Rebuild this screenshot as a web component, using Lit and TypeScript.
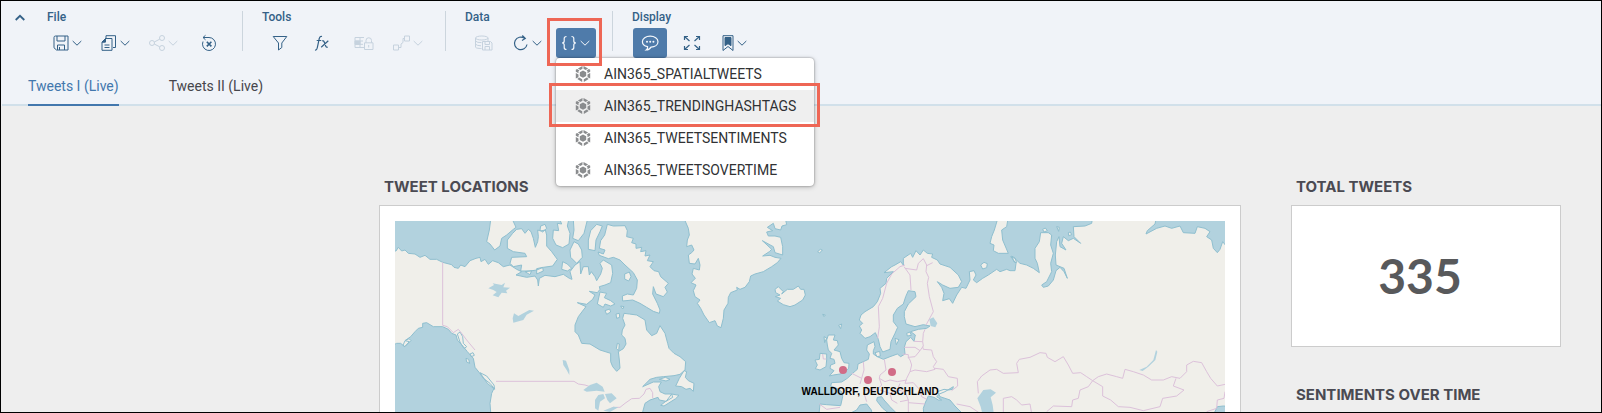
import { LitElement, html, svg, css, nothing } from "lit";
import { customElement, property, state } from "lit/decorators.js";
import { classMap } from "lit/directives/class-map.js";

const icons: Record<string, unknown> = {
  save: svg`<path d="M2.500 1h12.500v14H3.500L1 12.800V2.500Q1 1 2.500 1zM4 1v5h8V1M4.500 15v-5h7v5M6.500 12v3"/>`,
  copy: svg`<path d="M5 3V.7h9.500v11.800H12M4.500 3.500H11V15.300H1V7zM4.500 3.500V7H1M3.500 10h5M3.500 12.500h5"/><path class="solid" d="M1 7l3.500-3.500V7z"/>`,
  share: svg`<circle cx="3" cy="8" r="2.500"/><circle cx="13" cy="3" r="2.500"/><circle cx="13" cy="13" r="2.500"/><path d="M5.300 7l5.400-2.800M5.300 9l5.400 2.800"/>`,
  reset: svg`<path d="M2 6.500A6.500 6.500 0 1 0 8 2.500H2M4.500.3L2 2.500l2.500 2.300"/><path class="heavy" d="M5.800 6.800l4.600 4.600M10.400 6.800l-4.600 4.600"/>`,
  filter: svg`<path d="M1.200 1.500h13.600L9.800 8v4.500L6.500 15V8z"/>`,
  fx: svg`<path class="bold" d="M8 1.500Q5.800.8 5.300 3.500L3.200 13Q2.800 15.300 1 15M2.700 5.500h4.500M8 6q1.500-.8 2.200 1l1.600 4.200q.6 1.500 1.900.7M14.300 5.700L7.200 12.200"/>`,
  lock: svg`<path d="M8 12.500H-1V2.500H8M-1 6h8M-1 9.300h8M4 2.500v10"/><path class="solid" d="M-1 6h5v3.300h-5z"/><path d="M8.500 7.800h8.500v6.700H8.500zM10 7.800V5.500a2.700 2.700 0 0 1 5.500 0v2.300M12.700 10v2.500"/>`,
  path: svg`<path d="M-.5 10h5v5h-5zM10.500 1h5v5h-5zM4.500 12.500H7V9l2-1.500v-4h1.500"/>`,
  dbsave: svg`<path d="M6.500 13.500C3 13.500.500 13 .500 12V3M13 3v3M.500 6q1.500 1.800 6 1.600M.500 9.200q1.500 1.600 5.500 1.600"/><ellipse cx="6.800" cy="3" rx="6.300" ry="2"/><path d="M7.500 6.500h8l1.500 1.500v7H7.500zM10 6.500v3h4.500v-3M10 15v-3.500h4.500V15"/>`,
  refresh: svg`<path class="bold" d="M14 9.500A6.300 6.300 0 1 1 11.500 3.300M9.300.5l3 3-3.300 2"/>`,
  braces: svg`<path class="bold" d="M5.500 1.500Q3.200 1.500 3.200 3.500V6Q3.200 8 1 8q2.200 0 2.200 2v2.500q0 2 2.300 2M10.500 1.500q2.300 0 2.300 2V6q0 2 2.200 2-2.200 0-2.200 2v2.500q0 2-2.300 2"/>`,
  chat: svg`<path class="bold" d="M8.200 1.200C12.500 1.200 16 3.500 16 6.700s-3.200 5.200-7 5.400Q7.500 14.800 4.200 15q1.800-1.500 1.400-3.300C2.500 11 .4 9.200.4 6.700c0-3.200 3.500-5.500 7.800-5.500z"/><path class="dots" d="M5 6.700h.010M8.200 6.700h.010M11.400 6.700h.010"/>`,
  expand: svg`<path class="bold" d="M.5 5V1.500H4M.8 1.800L5.500 6M12 1.500h3.500V5M15.200 1.800L10.500 6M.5 11v3.500H4M.8 14.200L5.500 10M12 14.500h3.500V11M15.200 14.200L10.500 10"/>`,
  bookmark: svg`<path d="M3 .7h10v14.800L8 11.500l-5 4z"/><path class="solid" d="M5 2.500h6v8.200L8 8.700l-3 2z"/>`,
  down: svg`<path class="bold" d="M.7 1L5 5.200 9.300 1"/>`,
  cube: svg`<path class="solid" stroke="none" d="M8 4.500l3.200 1.800v3.600L8 11.700 4.800 9.900V6.300zM7.500 0v2.700L5.300 4 2.900 2.600zM8.500 0v2.700L10.700 4l2.400-1.400zM2.100 3l2.400 1.400-1 .8v2L.8 5.700V3.800zM13.900 3l-2.400 1.400 1 .8v2l2.700-1.500V3.800zM.8 7l2.700 1.500v2.700L.8 12.500zM15.200 7l-2.700 1.500v2.700l2.700 1.300zM4.200 11.500l3 1.700v2.800L2.300 13.100zM11.800 11.500l-3 1.700v2.800l4.900-2.900z"/>`,
};

const icon = (name: string, slim = false) =>
  html`<svg class=${classMap({ icon: true, slim })} viewBox=${slim ? "2 0 12 16" : "0 0 16 16"} aria-hidden="true">${icons[name]}</svg>`;
const chevron = html`<svg class="chevron" viewBox="0 0 10 6" aria-hidden="true">${icons.down}</svg>`;

interface Tool {
  icon: string;
  label: string;
  menu?: boolean;
  off?: boolean;
  active?: boolean;
  slim?: boolean;
}

const groups: { title: string; tools: Tool[] }[] = [
  {
    title: "File",
    tools: [
      { icon: "save", label: "Save", menu: true },
      { icon: "copy", label: "Copy", menu: true },
      { icon: "share", label: "Share", menu: true, off: true },
      { icon: "reset", label: "Reset" },
    ],
  },
  {
    title: "Tools",
    tools: [
      { icon: "filter", label: "Filter" },
      { icon: "fx", label: "Formula" },
      { icon: "lock", label: "Lock cells", off: true },
      { icon: "path", label: "Link", menu: true, off: true },
    ],
  },
  {
    title: "Data",
    tools: [
      { icon: "dbsave", label: "Publish data", off: true },
      { icon: "refresh", label: "Refresh", menu: true },
      { icon: "braces", label: "Variables", menu: true, active: true },
    ],
  },
  {
    title: "Display",
    tools: [
      { icon: "chat", label: "Comments", active: true },
      { icon: "expand", label: "Full screen" },
      { icon: "bookmark", label: "Bookmark", menu: true, slim: true },
    ],
  },
];

const models = ["AIN365_SPATIALTWEETS", "AIN365_TRENDINGHASHTAGS", "AIN365_TWEETSENTIMENTS", "AIN365_TWEETSOVERTIME"];

@customElement("tool-bar")
class ToolBar extends LitElement {
  @state() private open = true;
  @state() private current = 1;

  static styles = css`
    :host { display: flex; align-items: flex-start; padding-top: 10px; color: #346187; }
    button { font: inherit; border: 0; background: none; color: inherit; padding: 0; margin: 0; }
    svg { display: block; fill: none; stroke: currentColor; stroke-width: 1; overflow: visible; }
    .solid { fill: currentColor; }
    .bold { stroke-width: 1.2; }
    .heavy { stroke-width: 1.6; }
    .dots { stroke-width: 2; stroke-linecap: round; }
    .icon { width: 16px; height: 16px; }
    .icon.slim { width: 12px; }
    .chevron { width: 10px; height: 6px; }
    .chevron .bold { stroke-width: 1; }
    .collapse { width: 47px; height: 14px; display: flex; justify-content: center; align-items: center; padding-right: 10px; }
    .collapse .bold { stroke-width: 1.8; }
    .collapse .chevron { transform: rotate(180deg); }
    .group { position: relative; padding: 0 16px 0 20px; }
    .group:first-of-type { padding-left: 0; }
    .group + .group { border-left: 1px solid transparent; }
    .group + .group::before { content: ""; position: absolute; left: -1px; top: 0; width: 1px; height: 40px; background: #ccd5dd; }
    .title { font-size: 12px; line-height: 12px; margin: 0 0 5px -1px; font-weight: 500; }
    .tools { display: flex; gap: 8px; }
    .slot { position: relative; }
    .tool { width: 34px; height: 30px; display: flex; align-items: center; justify-content: center; gap: 3px; border-radius: 3px; }
    .tool.wide { width: 40px; padding-right: 1px; }
    .tool.narrow { width: 36px; }
    .tool.off { color: #c6d2de; }
    .tool.on { background: #4f7baa; color: #f4f8fc; }
    .menu {
      position: absolute; z-index: 1; top: 30px; left: 0; min-width: 258px; margin: 0; padding: 0; list-style: none;
      background: #fff; border-radius: 4px; box-shadow: 0 0 2px rgba(0, 0, 0, 0.4), 0 1px 5px rgba(0, 0, 0, 0.25);
      color: #303234; white-space: nowrap;
    }
    .menu li { position: relative; }
    .entry { width: 100%; height: 32px; display: flex; align-items: center; gap: 13px; padding: 0 16px 0 19px; font-size: 14px; line-height: 20px; }
    .entry .icon { color: #8a8c8e; }
    .entry.current { background: #efefef; }
    .mark { position: absolute; z-index: 2; border: 3px solid #ee6655; pointer-events: none; }
    .mark-button { inset: -10px -6px -8px -9px; }
    .mark-entry { inset: -7px -6px -5px -7px; }
  `;

  private renderMenu() {
    return html`
      ${this.open
        ? html`<ul class="menu">
            ${models.map(
              (m, i) => html`<li>
                <button class=${classMap({ entry: true, current: i === this.current })} @click=${() => (this.current = i)}>
                  ${icon("cube")}<span>${m}</span>
                </button>
                ${i === this.current ? html`<span class="mark mark-entry"></span>` : nothing}
              </li>`
            )}
          </ul>`
        : nothing}
      <span class="mark mark-button"></span>
    `;
  }

  render() {
    return html`
      <button class="collapse" aria-label="Collapse toolbar">${chevron}</button>
      ${groups.map(
        (g) => html`<div class="group">
          <h2 class="title">${g.title}</h2>
          <div class="tools">
            ${g.tools.map(
              (t) => html`<div class="slot">
                <button
                  class=${classMap({ tool: true, wide: !!t.menu, narrow: !!t.slim, off: !!t.off, on: !!t.active })}
                  aria-label=${t.label}
                  ?disabled=${!!t.off}
                  @click=${() => { if (t.icon === "braces") this.open = !this.open; }}
                >
                  ${icon(t.icon, t.slim)}${t.menu ? chevron : nothing}
                </button>
                ${t.icon === "braces" ? this.renderMenu() : nothing}
              </div>`
            )}
          </div>
        </div>`
      )}
    `;
  }
}

const northAmerica = `M60,243 L78,243 85,232 95,243 105,240 115,250 135,252 150,262 165,256 180,268 200,268 218,277 245,284
 252,292 265,295 272,285 285,290 300,272 318,265 330,262 333,275 345,268 355,283 368,272 385,278 400,290 420,285 440,298 455,305
 438,315 470,322 495,318 503,330 505,348 508,325 525,316 555,320 580,313 598,325 606,328 600,305 615,285 630,275 632,312 640,290
 655,290 658,315 664,305 675,320 680,332 692,312 697,295 690,280 700,270 725,285 728,310 722,338 705,345 688,350 690,358 682,368
 658,364 675,375 668,388 650,403 622,398 648,410 640,420 625,440 615,465 615,485 625,495 635,520 660,522 690,540 722,550 722,575
 728,590 740,604 750,595 748,570 745,545 760,536 768,522 765,505 755,495 757,480 765,465 758,445 762,430 778,432 800,435 825,450
 830,480 845,497 860,490 870,467 885,490 893,520 897,535 912,550 930,560 947,575 945,600 930,613 912,617 880,620 860,622 840,628
 818,650 850,636 874,636 866,650 870,665 885,672 905,672 908,682 888,694 868,690 864,682 840,690 825,700 818,726 L818,760 360,760
 362,726 360,700 365,670 372,655 360,640 340,625 328,608 315,592 310,565 292,545 280,530 262,510 258,495 245,490 235,478 218,470
 190,470 170,458 158,460 158,472 145,475 135,485 122,500 105,512 118,515 104,530 92,520 80,520 60,530Z`;

const arctic = `M362,150 L358,180 350,215 360,222 374,240 390,228 395,205 410,195 430,178 438,172 428,150Z
 M440,178 L428,190 412,210 412,235 430,245 465,250 470,260 425,262 420,280 430,290 455,285 452,303 480,303 500,300 520,292 548,288
 562,268 545,245 530,228 530,195 526,180 512,183 503,180 505,200 503,215 496,232 490,205 483,185 475,178 465,190 455,176Z
 M512,168 L525,163 530,175 518,186 510,180Z M550,180 L548,205 558,225 578,233 597,222 600,190 592,168 596,150 570,150 575,162 562,160 566,182Z
 M610,150 L612,180 608,205 625,212 642,190 652,150Z M612,215 L600,240 602,262 620,280 637,262 635,240 625,222Z
 M578,275 L592,282 605,295 592,303 575,298Z M500,296 L518,292 520,303 500,312Z M465,305l20-3-5 12Z
 M680,163 L662,182 655,210 655,238 675,242 678,210 690,185 697,168Z
 M712,163 L730,168 765,167 772,182 770,200 790,205 785,218 798,222 798,235 815,232 812,245 828,242 825,258 840,255 832,272 850,275
 840,290 852,302 866,305 872,320 895,340 885,352 892,366 880,380 858,372 850,350 848,372 862,400 870,420 868,430 850,424 830,412 810,400
 788,390 758,393 757,378 772,372 790,375 800,355 802,330 790,308 765,285 750,270 730,262 715,266 688,256 684,246 700,252 705,240 688,235
 692,212 704,195Z M764,312l14-6 5 14-7 13-12-6Z M690,366 L710,370 703,383 722,392 735,402 722,408 705,402 700,412 682,402Z
 M705,422l14-5 3 9-12 7Z M738,432l10-2 1 12-9 3Z M742,520l6 2-2 20-7-6Z M752,408l10 2-4 7Z
 M942,602 L928,625 917,648 935,650 948,658 960,655 970,664 972,640 955,632 946,622 950,605Z
 M105,512l12-6 6 6-18 18-6-4Z M330,608 L350,618 372,645 374,658 352,640Z M300,552l9-4 4 8-9 4Z M288,565l8 3 3 12-9-4Z M262,492l8-6 8 14 2 20 10 10-8 6-12-20Z
 M905,672l22 4-10 10-35 22-10-2 18-14Z M868,628l18-6 14 6-12 5Z`;

const greenland = `M72,55 L85,85 88,105 82,120 80,140 95,135 102,150 95,158 85,165 88,190 105,192 115,175 120,195 118,210 100,205 96,222
 106,235 93,248 108,255 100,272 105,290 120,300 112,310 122,325 132,345 148,368 165,362 172,378 183,383 190,355 192,330 204,310 205,292
 212,278 232,270 230,262 240,268 255,262 268,245 272,228 285,222 310,215 335,200 352,188 363,175 345,172 330,166 308,168 328,155
 335,148 318,132 307,122 340,140 345,158 368,165 368,140 362,112 345,108 325,108 320,96 338,92 322,82 340,70 345,86 362,90 366,78 380,74 376,55Z
 M345,268 L355,260 370,275 365,282 382,268 400,268 415,258 422,268 432,268 436,285 428,300 405,315 390,320 370,314 352,303 362,295 346,290 360,285 347,278Z
 M473,155l8-7 6 2-8 9Z M488,343l8 2-4 5Z M536,376l9-4-3 14Z`;

const britain = `M505,405 L525,405 520,420 532,422 535,435 522,450 540,455 545,475 552,488 567,490 566,505 555,515 540,522 520,525 508,528 522,512
 510,505 512,495 525,490 522,478 510,475 515,460 505,450 502,435 500,420Z M480,460 L500,462 500,480 498,500 480,510 466,506 472,495 465,480 478,478Z
 M492,410l8 4-6 14Z`;

const eurasia = `M475,660 L480,612 500,614 542,617 548,590 545,575 530,565 512,558 515,548 545,546 562,535 578,520 592,508 594,492 612,484
 625,478 628,462 620,450 622,435 642,425 645,440 640,452 640,462 652,470 670,478 690,470 712,462 722,470 735,462 733,442 738,425 752,412
 762,424 766,405 752,395 775,388 800,385 810,378 790,374 765,380 738,372 733,350 733,335 745,312 768,290 765,275 745,272 737,290 730,312
 712,325 700,345 700,365 713,382 705,400 693,425 690,448 668,456 660,440 655,418 646,398 630,410 615,415 600,400 605,390 598,378 608,370
 598,360 603,345 615,335 640,320 652,305 662,280 660,265 678,250 680,235 700,215 672,218 695,200 705,195 722,185 730,195 730,175 752,160
 758,172 768,152 780,165 790,150 802,160 818,162 815,172 832,180 840,192 870,202 895,225 905,245 895,262 870,265 848,255 832,245
 845,262 852,280 848,302 868,296 878,310 890,285 905,262 918,265 930,240 928,215 942,212 948,225 940,240 950,248 968,235 985,225 1010,208
 1020,215 1040,208 1050,212 1065,212 1068,190 1052,170 1064,175 1080,190 1100,195 1120,205 1138,218 1132,190 1125,175 1125,145 1138,125 1142,98
 1165,98 1175,105 1172,135 1180,160 1172,190 1175,215 1160,245 1145,255 1150,262 1165,258 1180,240 1188,212 1200,202 1212,215 1222,235
 1212,205 1188,195 1186,165 1190,125 1197,110 1200,140 1218,150 1205,130 1210,110 1225,122 1240,115 1262,130 1242,110 1240,80 1275,78
 1295,70 1298,50 1490,50 1485,72 1462,92 1458,102 1490,85 1515,78 1535,85 1560,78 1570,98 1605,100 1612,80 1635,85 1650,95 1640,110
 1655,120 1660,145 1672,158 1680,148 1688,125 1700,140 L1720,140 1720,620 1690,618 1672,620 1660,645 920,660 L905,638 885,618 870,600
 840,590 832,575 852,568 865,570 878,568 880,560 855,575 838,582 830,590 845,600 835,600 822,592 805,588 795,610 790,625 792,660
 L715,660 710,640 690,620 672,600 665,590 652,592 650,602 668,625 690,642 690,660 640,660 634,630 620,612 600,615 590,630 570,640 555,660Z
 M645,458l14-4 2 14-10 2Z M705,415l12 4-8 15Z M740,400l10-4 4 10-12 2Z M1015,50 L1045,50 1040,80 1025,90 1028,120 1045,160 1015,160 1000,152 1002,135 990,130 995,110 1003,90Z
 M1055,168l10 6 5 14-8-2Z M962,195l10-8 10 4-2 12-12 4Z M1148,88l8-4 6 8-10 4Z M1190,80l8 2-2 12Z M1225,98l6-2 4 8-9 3Z`;

const lakes = `M355,355 L372,345 368,340 395,345 405,338 400,352 420,353 408,362 412,370 395,368 385,382 368,376 380,366 370,360Z
 M428,445 L432,430 445,438 460,430 478,420 492,422 470,434 460,450 430,458Z M578,570 L588,572 598,600 598,615 590,600 580,585Z
 M640,660 L660,645 680,638 698,650 704,665 680,662 650,665Z M675,690 L685,675 700,672 705,685 690,695 685,722 675,715Z M705,672 L725,670 740,685
 730,692 720,700 712,690Z M700,722 L730,710 745,712 720,726Z M1678,448l12-6 12 18-6 12-14-4Z
 M1822,685 L1840,660 1862,658 1878,668 1862,682 1868,705 1872,735 1838,735 1832,710Z M2308,600 L2330,590 2350,570 2358,540 2362,545 2356,570 2335,590 2318,603Z`;

const americanBorders = `M218,277 V466 L232,470 250,488 265,478 275,490 290,510 315,540 M378,634 H612 L625,642 645,645 660,650 M712,722 L730,712 750,712
 765,700 785,686 808,685 822,672 828,658 840,655 848,668 848,684`;

const eurasianBorders = `M653,415 L658,380 655,320 668,295 680,250 695,222 720,200 735,195 M732,200 L750,225 753,270 M735,205 L770,210 775,190 790,176
 800,195 798,215 806,232 802,250 808,290 820,335 798,375 M798,198 L818,188 M733,442 L765,442 780,452 790,438 788,425 790,400 795,388
 M762,424 L788,425 M728,462 L745,464 745,475 M745,472 L765,470 780,452 M788,440 L790,448 815,450 820,470 830,485 820,500 825,508 800,515
 765,510 750,515 M745,472 L750,480 755,495 750,515 740,535 M825,505 L850,508 865,530 892,535 893,558 875,572 M740,535 L735,550 760,548 780,570
 785,590 800,598 M673,478 L678,510 660,525 658,535 675,545 690,540 712,545 740,540 M610,485 L612,510 605,535 M575,520 L605,535 M605,535 L600,552
 M618,560 L612,580 620,605 M658,535 L665,555 650,570 618,570 M660,570 L690,580 712,570 720,550 M690,580 L695,600 712,610 M712,570 L735,575 745,600
 720,605 M745,608 L795,612 M745,600 L745,640 M478,612 L500,628 540,622 M488,462l2 15 9 0
 M955,580 L952,545 965,528 990,510 1010,508 1030,520 1075,518 1070,490 1078,478 1110,472 1140,458
 1158,460 1162,472 1185,485 1210,470 1225,495 1238,520 1262,518 1280,530 1298,542 1315,530 1340,522 1370,530 1388,535 1395,508 1420,515
 1450,525 1475,540 1510,540 1535,530 1560,535 1580,515 1580,495 1600,484 1625,488 1640,515 1652,535 1672,558 1700,552 M1298,542 L1285,560 1260,570
 1255,595 1238,600 1235,620 1180,618 1160,635 M1298,542 L1328,560 1328,588 1352,600 1375,620 1410,622 1450,632 1500,620 1508,595 1550,588
 1572,570 1540,558 1548,535 M1030,640 V595 L1055,590 1070,600 1085,615 1110,612 1115,640 M890,612 L930,620 960,640 M1695,575 L1692,595 1672,600
 1670,625 1640,635`;

@customElement("tweet-map")
class TweetMap extends LitElement {
  static styles = css`
    :host { display: block; position: relative; }
    svg { display: block; width: 100%; height: auto; background: #b2d2de; }
    .land { fill: #f0efea; stroke: #8fbfcf; stroke-width: 3; stroke-linejoin: round; }
    .lake { fill: #b2d2de; }
    .border { fill: none; stroke: #dcc1da; stroke-width: 3; stroke-linejoin: round; }
    .pin { fill: #d16c87; }
    .place { position: absolute; left: 57%; top: 84%; transform: translate(-50%, -50%); font-family: "Liberation Sans", sans-serif; font-size: 10px; line-height: 12px; font-weight: 700; color: #000; white-space: nowrap; }
  `;

  render() {
    return html`
      <svg viewBox="75 153 2490 576" role="img" aria-label="Map of tweet locations">
        <path class="land" d="${northAmerica} ${arctic}" />
        <g transform="translate(870 90)">
          <path class="land" d="${greenland} ${britain} ${eurasia}" />
          <path class="border" d=${eurasianBorders} />
        </g>
        <path class="border" d=${americanBorders} />
        <path class="lake" d=${lakes} />
        <circle class="pin" cx="1419" cy="600" r="12" />
        <circle class="pin" cx="1494" cy="630" r="12" />
        <circle class="pin" cx="1566" cy="606" r="12" />
      </svg>
      <span class="place">WALLDORF, DEUTSCHLAND</span>
    `;
  }
}

@customElement("tweet-panel")
class TweetPanel extends LitElement {
  @property() heading = "";

  static styles = css`
    :host { display: block; }
    .heading { margin: 0 0 8px 5px; font-family: "Inter", "Liberation Sans", sans-serif; font-size: 15px; line-height: 20px; font-weight: 700; color: #4a4a52; }
    .card { border: 1px solid #ccc; background: #fff; }
  `;

  render() {
    return html`<h2 class="heading">${this.heading}</h2><div class="card"><slot></slot></div>`;
  }
}

@customElement("app-root")
class AppRoot extends LitElement {
  @state() private tab = 0;

  static styles = css`
    :host {
      display: flex; flex-direction: column; box-sizing: border-box; height: 100vh; overflow: hidden;
      border: 1px solid #000; background: #eee; font-family: "Roboto", "Liberation Sans", sans-serif;
    }
    header { background: #f0f3f8; flex: none; }
    .tabs { display: flex; gap: 50px; margin-left: 1px; padding: 18px 26px 0; border-bottom: 2px solid #d1e0ea; }
    .tab { font: inherit; font-size: 14px; line-height: 20px; padding: 0 0 8px; margin: 0 0 -2px; border: 0; border-bottom: 2px solid transparent; background: none; color: #46464c; }
    .tab.selected { color: #4277ad; border-color: #4277ad; }
    main { display: grid; grid-template-columns: 862fr 270fr; gap: 50px; padding: 71px 40px 0 378px; align-items: start; flex: 1; min-height: 0; }
    .map { padding: 15px; }
    .side { display: grid; gap: 38px; }
    .total { height: 140px; display: flex; align-items: center; justify-content: center; padding-right: 12px; font-family: "Lato", sans-serif; font-size: 48px; line-height: 58px; font-weight: 700; color: #58595b; }
    .trend { height: 140px; }
  `;

  render() {
    return html`
      <header>
        <tool-bar></tool-bar>
        <nav class="tabs">
          ${["Tweets I (Live)", "Tweets II (Live)"].map(
            (t, i) => html`<button class=${classMap({ tab: true, selected: i === this.tab })} @click=${() => (this.tab = i)}>${t}</button>`
          )}
        </nav>
      </header>
      <main>
        <tweet-panel heading="TWEET LOCATIONS"><tweet-map class="map"></tweet-map></tweet-panel>
        <div class="side">
          <tweet-panel heading="TOTAL TWEETS"><div class="total">335</div></tweet-panel>
          <tweet-panel heading="SENTIMENTS OVER TIME"><div class="trend"></div></tweet-panel>
        </div>
      </main>
    `;
  }
}
